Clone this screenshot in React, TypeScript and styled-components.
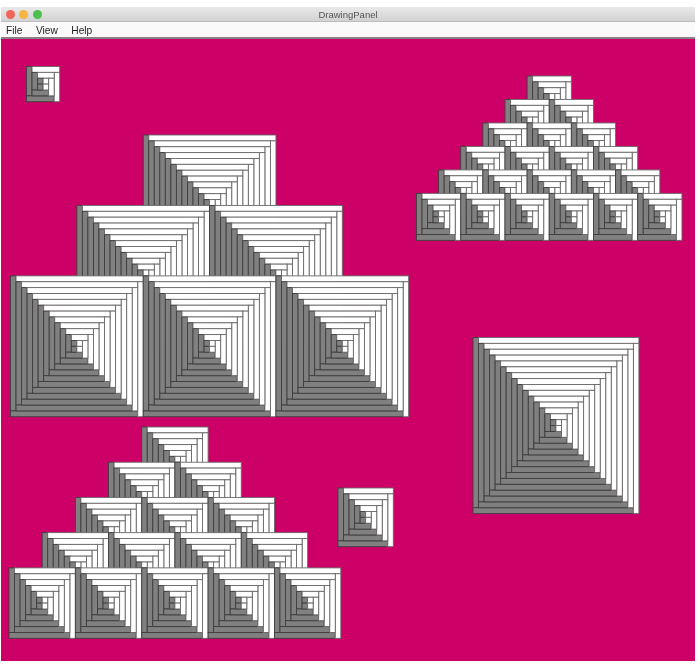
import * as React from 'react'
import styled, { createGlobalStyle } from 'styled-components'

const GlobalStyle = createGlobalStyle`
    html, body {
        margin: 0;
        padding: 0;
        background: #fff;
        font-family: "Liberation Sans", Arial, sans-serif;
    }
`

const Page = styled.div`
    width: 700px;
    height: 666px;
    padding: 7px 5px 0 1px;
    box-sizing: border-box;
    overflow: hidden;
`

const Window = styled.div`
    display: flex;
    flex-direction: column;
    width: 694px;
`

const TitleBar = styled.div`
    position: relative;
    height: 14px;
    display: flex;
    align-items: center;
    justify-content: center;
    background: linear-gradient(#e9e9e9, #d2d2d2);
    border-bottom: 1px solid #bdbdbd;
`

const Lights = styled.div`
    position: absolute;
    left: 4.5px;
    top: 2.5px;
    display: flex;
    gap: 4.5px;
`

const Light = styled.span<{ color: string }>`
    width: 9px;
    height: 9px;
    border-radius: 50%;
    background: ${props => props.color};
    filter: blur(0.25px);
`

const Title = styled.span`
    font-size: 9.5px;
    color: #555;
    filter: blur(0.25px);
`

const MenuBar = styled.div`
    height: 17px;
    padding: 1px 5px 0;
    box-sizing: border-box;
    display: flex;
    align-items: center;
    gap: 13.5px;
    background: #fafafa;
    border-bottom: 2px solid #8a8088;
`

const MenuItem = styled.span`
    font-size: 10.2px;
    color: #222;
    filter: blur(0.25px);
`

const Canvas = styled.svg`
    display: block;
    width: 694px;
    height: 622px;
    background: #cc0066;
    filter: blur(0.35px);
`

const BAR_W = 5.53
const BAR_H = 5.87

const Square = ({ x, y, steps }: { x: number; y: number; steps: number }) => {
    const bars = []
    for (let i = 0; i < steps; i++) {
        const left = x + i * BAR_W
        const top = y + i * BAR_H
        const w = (steps - i) * 2 * BAR_W
        const h = (steps - i) * 2 * BAR_H
        bars.push(
            <g key={i}>
                <g fill="#808080" stroke="#3f3f3f">
                    <rect x={left} y={top} width={BAR_W} height={h - BAR_H} />
                    <rect x={left} y={top + h - BAR_H} width={w - BAR_W} height={BAR_H} />
                </g>
                <g fill="#fff" stroke="#6a6a6a">
                    <rect x={left + BAR_W} y={top} width={w - BAR_W} height={BAR_H} />
                    <rect x={left + w - BAR_W} y={top + BAR_H} width={BAR_W} height={h - BAR_H} />
                </g>
            </g>
        )
    }
    return <g strokeWidth={0.9}>{bars}</g>
}

const Pyramid = ({ x, y, steps, rows }: { x: number; y: number; steps: number; rows: number }) => {
    const squares = []
    // top row first so the lower rows cover its bottom half
    for (let row = 0; row < rows; row++) {
        const rowX = x + (rows - 1 - row) * steps * BAR_W
        const rowY = y + row * steps * BAR_H
        for (let col = 0; col <= row; col++) {
            squares.push(
                <Square key={row + '-' + col} x={rowX + col * steps * 2 * BAR_W} y={rowY} steps={steps} />
            )
        }
    }
    return <g>{squares}</g>
}

const SQUARES = [
    { x: 26.5, y: 66.5, steps: 3 },
    { x: 338, y: 488, steps: 5 },
    { x: 473, y: 337.5, steps: 15 },
]

const PYRAMIDS = [
    { x: 416.5, y: 76, steps: 4, rows: 6 },
    { x: 10.5, y: 135, steps: 12, rows: 3 },
    { x: 9, y: 427, steps: 6, rows: 5 },
]

export default function App() {
    return (
        <Page>
            <GlobalStyle />
            <Window>
                <TitleBar>
                    <Lights>
                        <Light color="#f0645a" />
                        <Light color="#f5b540" />
                        <Light color="#4cc04c" />
                    </Lights>
                    <Title>DrawingPanel</Title>
                </TitleBar>
                <MenuBar>
                    <MenuItem>File</MenuItem>
                    <MenuItem>View</MenuItem>
                    <MenuItem>Help</MenuItem>
                </MenuBar>
                <Canvas viewBox="1 39 694 622">
                    {PYRAMIDS.map((p, i) => <Pyramid key={i} {...p} />)}
                    {SQUARES.map((s, i) => <Square key={i} {...s} />)}
                </Canvas>
            </Window>
        </Page>
    )
}
